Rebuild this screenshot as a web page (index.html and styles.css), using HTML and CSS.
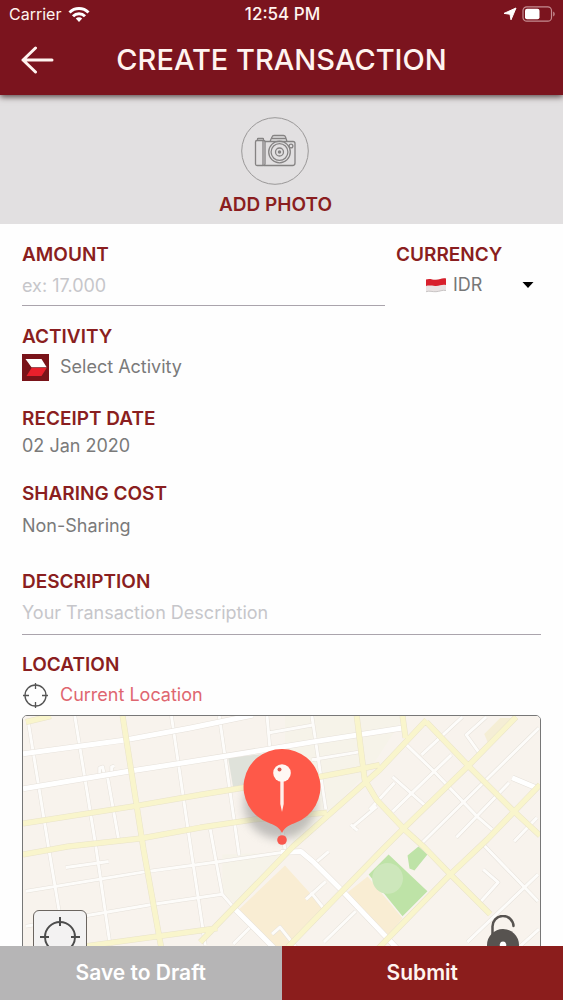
FILE: index.html
```html
<!DOCTYPE html>
<html lang="en">
<head>
<meta charset="utf-8">
<meta name="viewport" content="width=device-width, initial-scale=1">
<title>Create Transaction</title>
<link rel="stylesheet" href="styles.css">
</head>
<body>
<header class="header">
  <div class="status">
    <div class="status-left">
      <span>Carrier</span>
      <svg width="22" height="17" viewBox="0 0 22 17" fill="none" stroke="#fff" stroke-width="3" aria-hidden="true"><path d="M1.5 6.5a13.5 13.5 0 0 1 19 0"/><path d="M5 10.2a8.5 8.5 0 0 1 12 0"/><path d="M11 16l-3.2-3.4a4.6 4.6 0 0 1 6.4 0z" fill="#fff" stroke="none"/></svg>
    </div>
    <strong class="clock">12:54 PM</strong>
    <div class="status-right">
      <svg width="14" height="14" viewBox="0 0 14 14" fill="#fff" stroke="#fff" stroke-linejoin="round" aria-hidden="true"><path d="M13 1L8 12.800 7 7.200 1 6.400z"/></svg>
      <svg width="34" height="16" viewBox="0 0 34 16" aria-hidden="true"><rect x="1" y=".8" width="28.500" height="14.400" rx="3.800" fill="none" stroke="#c58c91" stroke-width="1.200"/><rect x="3" y="2.800" width="14.500" height="10.400" rx="2" fill="#fff"/><path d="M31.200 5.500c2 .8 2 4.200 0 5z" fill="#c58c91"/></svg>
    </div>
  </div>
  <div class="bar">
    <button class="back" type="button" aria-label="Back"><svg width="34" height="28" viewBox="0 0 34 28" fill="none" stroke="#fff4f0" stroke-width="3" stroke-linecap="round" stroke-linejoin="round" aria-hidden="true"><path d="M31 14H2M14.500 2L2 14l12.500 12"/></svg></button>
    <h1 class="title">CREATE TRANSACTION</h1>
  </div>
</header>

<main class="content">
  <section class="photo">
    <button class="photo-button" type="button">
      <svg width="68" height="68" viewBox="0 0 68 68" fill="none" stroke="#858383" stroke-width="1.300" stroke-linejoin="round" aria-hidden="true">
        <circle cx="34" cy="34" r="33.300" stroke="#9a9898" stroke-width="1"/>
        <path d="M14.500 25q0-1.500 1.500-1.500h6.500q1.500 0 1.500 1.500v22q0 1.500-1.500 1.500H16q-1.500 0-1.500-1.500z"/>
        <path d="M16.500 23.500v-1.300q0-.7.700-.7h4.600q.7 0 .7.700v1.300M22 24v24"/>
        <path d="M24 24.500h5l2-4.600q.5-1.400 2-1.400h9.500q1.500 0 2 1.400l1.500 4.600h6q2 0 2 2V46q0 2.500-2.500 2.500H23M31 21.500h14M29 24.500h17.500"/>
        <circle cx="38.500" cy="35" r="10.800"/><circle cx="38.500" cy="35" r="8.400"/><circle cx="38.500" cy="35" r="4"/><circle cx="38.500" cy="35" r="1.100" fill="#858383"/>
        <circle cx="50" cy="29" r="1.900"/>
      </svg>
      <span>ADD PHOTO</span>
    </button>
  </section>

  <form class="form" id="transaction">
    <div class="row">
      <div class="field grow">
        <label class="label" for="amount">AMOUNT</label>
        <input class="input" id="amount" type="text" placeholder="ex: 17.000">
      </div>
      <div class="field currency">
        <label class="label" for="currency">CURRENCY</label>
        <div class="picker">
          <svg width="22" height="16" viewBox="0 0 22 16" aria-hidden="true"><path d="M1 2.500c4-1.500 6 .4 10 .2 4 0 6-2 10-1.200v12c-4-.8-6 1-10 1.200-4 .2-6-1.200-10 0z" fill="#e9e3e3"/><path d="M1 2.500c4-1.500 6 .4 10 .2 4 0 6-2 10-1.200v6.500c-4-.8-6 .8-10 1-4 .2-6-1-10 0z" fill="#d8202c"/><path d="M1 14.700c4-1.200 6 .2 10 0 4-.2 6-2 10-1.200" fill="none" stroke="#c9c5c5"/></svg>
          <select class="select" id="currency"><option>IDR</option></select>
          <svg class="caret" width="12" height="6" viewBox="0 0 12 6" aria-hidden="true"><path d="M.5 0h11L6 6z"/></svg>
        </div>
      </div>
    </div>

    <div class="field activity">
      <span class="label" id="activity-label">ACTIVITY</span>
      <button class="value with-icon" type="button" aria-labelledby="activity-label activity-value">
        <svg width="27" height="27" viewBox="0 0 27 27" aria-hidden="true"><path fill="#791319" d="M0 0h27v27H0z"/><path fill="#fff" d="M3.500 5H19.500l5.200 8.300H9.500z"/><path fill="#e8202c" d="M9.500 14h15.200L19.500 22h-15z"/></svg>
        <span id="activity-value">Select Activity</span>
      </button>
    </div>

    <div class="field date">
      <span class="label" id="date-label">RECEIPT DATE</span>
      <button class="value compact" id="date-value" type="button" aria-labelledby="date-label date-value">02 Jan 2020</button>
    </div>

    <div class="field sharing">
      <span class="label" id="sharing-label">SHARING COST</span>
      <button class="value" id="sharing-value" type="button" aria-labelledby="sharing-label sharing-value">Non-Sharing</button>
    </div>

    <div class="field description">
      <label class="label" for="description">DESCRIPTION</label>
      <input class="input" id="description" type="text" placeholder="Your Transaction Description">
    </div>

    <div class="field location">
      <span class="label" id="location-label">LOCATION</span>
      <button class="value with-icon current" type="button" aria-labelledby="location-label location-value">
        <svg width="27" height="27" viewBox="0 0 27 27" fill="none" stroke="#555" stroke-width="1.300" aria-hidden="true"><circle cx="13.500" cy="13.500" r="10.500"/><path d="M13.500 1v6M13.500 20v6M1 13.500h6M20 13.500h6"/></svg>
        <span id="location-value">Current Location</span>
      </button>
      <div class="map">
        <svg class="map-art" viewBox="22 716 519 258" preserveAspectRatio="xMidYMin slice" aria-hidden="true">
          <path fill="#f8f3ed" d="M22 716h519v260H22z"/>
          <path fill="#f6f3e9" d="M285 716h120l-35 54-75 78-10-40zM222 855l60-2-45 52-15-10z"/>
          <path fill="#dfe2da" d="M228 758l45-5v30l-40 5z"/>
          <path fill="#f9edd3" d="M285 866l38 42-42 46-42-44zM368 877l35 42-17 20-38-46z"/>
          <path fill="#f5eed5" d="M485 734l16-16h14l-25 28z"/>
          <path fill="#bee3a7" d="M389 855l39 37-25 25-34-42zM408 856l11-9 9 8-13 16-5-2z"/>
          <circle cx="388" cy="879" r="15.500" fill="#cde7bb"/>
          <defs>
            <path id="streets" d="M27 720l21 130 10 60 7 50M74 716l21 130 15 104M107 778l11 62M99 777v-9l3-1 2 10M111 777v-10l3-1M171 716l19 130 15 100M219 716l20 140M210 830l4 22 8 43 13 15M267 716l3 34 15 100M312 716l14 94M268 733l45-8M312 760l48-8M25 892l122-20 66-9 69-10M65 868l43-6M25 927l63-11 65-11 69-10M405 743l30 29 43 45 15 13M463 717l-41 38M452 755l-59 57M393 777l34 30M395 783l-25 27M487 717l-20 18 13 18M540 728l-53 52-64 63M510 783l-53 55M538 818l-23 24M484 845l55 57M539 875l-71 68M484 870l15 13-18 20M329 852l-13 11M326 882l-20 18M311 893l12 15M356 912l-32 31M377 807l-25 21M351 825l7 6M253 925l-20 20M272 935l8-7 20 25M540 930l-20 18"/>
            <path id="avenues" d="M22 754l103-14 65-12 63-13M22 789l103-17 65-10 123-20 90-14M235 910l45 45M281 853l20-1 13 11 30 30 57 60M513 778l24 10"/>
            <path id="mains" d="M25 722l25-6M22 824l115-18 63-11 43-7 77-11 37-7 23-5M22 855l45-8 73-8 60-11 53-8 74-7M85 947l132-18M122 716l21 134 18 100M357 716l8 64 12 20 28 30 20 18 26 27 40 40M403 716l3 22M427 720l-47 50-87 77-93 96M517 717l-47 48-65 63-22 22-95 98M427 722l43 45 43 43 28 26M541 785l-53 55-37 35-72 74"/>
          </defs>
          <g fill="none" stroke-linejoin="round">
            <use href="#streets" class="street-edge"/>
            <use href="#streets" class="street"/>
            <use href="#avenues" class="avenue-edge"/>
            <use href="#avenues" class="avenue"/>
            <use href="#mains" class="main-edge"/>
            <use href="#mains" class="main"/>
          </g>
        </svg>
        <svg class="pin" width="100" height="110" viewBox="0 0 100 110" role="img" aria-label="Selected place">
          <defs><filter id="soft" x="-30%" y="-30%" width="160%" height="160%"><feGaussianBlur stdDeviation="5"/></filter></defs>
          <ellipse cx="48" cy="58" rx="36" ry="35" fill="#888" opacity=".5" filter="url(#soft)"/>
          <path d="M50 3a38 38 0 0 1 14 73.500c-6 2.500-11 4-14 10.500-3-6.500-8-8-14-10.500A38 38 0 0 1 50 3z" fill="#fe5949"/>
          <circle cx="50" cy="94" r="4.800" fill="#f9574d"/>
          <path d="M48.300 35h3.400v23L50 66l-1.700-8z" fill="#fff0eb"/>
          <circle cx="50" cy="27" r="8.800" fill="#fff7f3"/><circle cx="47.500" cy="23.500" r="2" fill="#d95a50"/>
        </svg>
        <button class="locate" type="button" aria-label="Centre on my location"><svg width="40" height="40" viewBox="0 0 40 40" fill="none" stroke="#4c4c4c" stroke-width="2" aria-hidden="true"><circle cx="20" cy="20" r="15"/><path d="M20 0v9M20 31v9M0 20h9M31 20h9"/></svg></button>
        <button class="lock" type="button" aria-label="Lock map"><svg width="34" height="48" viewBox="0 0 34 48" aria-hidden="true"><path d="M6.500 20V12a10.500 10.500 0 0 1 21-1" fill="none" stroke="#575350" stroke-width="2.500" stroke-linecap="round"/><circle cx="17" cy="30" r="16" fill="#575350"/><path d="M17 26.500a3.200 3.200 0 0 1 1.600 6v5h-3.200v-5a3.200 3.200 0 0 1 1.600-6z" fill="#fff"/></svg></button>
      </div>
    </div>
  </form>
</main>

<footer class="footer">
  <button class="action draft" type="button">Save to Draft</button>
  <button class="action submit" type="submit" form="transaction">Submit</button>
</footer>
</body>
</html>
```
FILE: styles.css
```css
* { box-sizing: border-box; }

body {
  margin: 0;
  height: 100vh;
  display: flex;
  flex-direction: column;
  background: #fefefe;
  color: #777;
  font-family: Inter, "Liberation Sans", sans-serif;
  font-size: 18px;
  line-height: 24px;
}

button, input, select {
  margin: 0;
  padding: 0;
  border: 0;
  background: none;
  color: inherit;
  font: inherit;
}

svg { display: block; flex: none; }

.header {
  position: relative;
  z-index: 1;
  background: #7b141e;
  color: #fff4f0;
  box-shadow: 0 2px 6px #5a4a4a;
}

.status {
  display: grid;
  grid-template-columns: 1fr auto 1fr;
  align-items: center;
  height: 28px;
  padding: 0 7px 0 9px;
  font-size: 16px;
}

.status-left, .status-right {
  display: flex;
  align-items: center;
  gap: 7px;
}

.status-right { justify-content: flex-end; gap: 5px; }

.clock { font-size: 17px; font-weight: 500; }

.bar {
  display: grid;
  grid-template-columns: 34px 1fr 34px;
  align-items: center;
  height: 67px;
  padding: 0 21px 3px;
}

.title {
  margin: 0;
  font-size: 29px;
  font-weight: 500;
  line-height: 32px;
  text-align: center;
  white-space: nowrap;
}

.content {
  flex: 1;
  min-height: 0;
  overflow-y: auto;
  scrollbar-width: none;
}

.photo {
  display: flex;
  justify-content: center;
  padding: 22px 12px 7px 0;
  background: #e2e0e1;
}

.photo-button {
  display: flex;
  flex-direction: column;
  align-items: center;
  gap: 8px;
}

.photo-button, .label {
  color: #8a1e20;
  font-size: 19px;
  font-weight: 600;
}

.form { padding: 19px 22px 24px; }

.row { display: flex; gap: 11px; }

.field { display: flex; flex-direction: column; }

.grow { flex: 1; min-width: 0; }

.currency { flex: 0 0 145px; }

.input {
  width: 100%;
  height: 39px;
  padding-bottom: 2px;
  border-bottom: 1px solid #aaa4ac;
  border-radius: 0;
  outline: 0;
}

.input::placeholder { color: #c6c6ca; opacity: 1; }

.picker {
  position: relative;
  display: flex;
  align-items: center;
  height: 36px;
  padding-left: 29px;
  gap: 6px;
}

.select {
  flex: 1;
  appearance: none;
}

.caret {
  position: absolute;
  right: 7px;
  pointer-events: none;
}

.value {
  display: flex;
  align-items: center;
  min-height: 36px;
  color: #7a7a7a;
  text-align: left;
}

.compact { min-height: 30px; }

.with-icon { gap: 11px; }

.activity { margin-top: 19px; }
.date { margin-top: 22px; }
.sharing { margin-top: 21px; }
.sharing .value { min-height: 40px; }
.description { margin-top: 24px; }
.description .input { height: 41px; padding-bottom: 4px; }
.location { margin-top: 18px; }
.current { color: #df6670; }

.map {
  position: relative;
  margin-top: 2px;
  overflow: hidden;
  border: 1px solid #777;
  border-radius: 5px;
}

.map-art { width: 100%; }

.street-edge, .avenue-edge, .main-edge { stroke: #e6e1da; }
.street-edge { stroke-width: 4; }
.street { stroke: #fdfcfa; stroke-width: 3; }
.avenue-edge { stroke-width: 6; }
.avenue { stroke: #fff; stroke-width: 5; }
.main-edge { stroke: #e9e3ca; stroke-width: 6; }
.main { stroke: #f9f5cc; stroke-width: 5; }

.pin {
  position: absolute;
  top: 30px;
  left: 50%;
  transform: translateX(-50%);
}

.locate {
  position: absolute;
  bottom: 9px;
  left: 10px;
  display: grid;
  place-items: center;
  width: 54px;
  height: 54px;
  border: 1px solid #6b6560;
  border-radius: 6px;
  background: #f3f2f2;
}

.lock {
  position: absolute;
  right: 20px;
  bottom: 10px;
}

.footer {
  position: relative;
  z-index: 1;
  display: grid;
  grid-template-columns: 1fr 1fr;
  height: 54px;
  color: #fff4f0;
}

.action { font-size: 21px; font-weight: 600; }
.draft { background: #b6b5b6; color: #fff; }
.submit { background: #8b1d1c; }
```
